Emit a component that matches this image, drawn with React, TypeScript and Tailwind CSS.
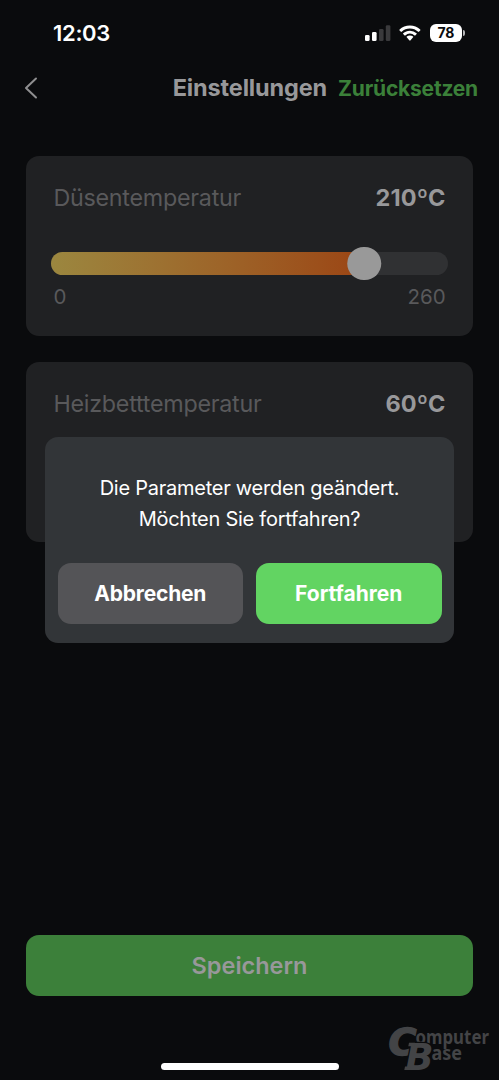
import React from "react";

function StatusBar() {
  return (
    <div className="flex h-[54px] items-start pl-[53px] pr-[35px] pt-[21px]">
      <span className="text-[22px] font-semibold leading-[25px] tracking-[-0.3px] text-white">12:03</span>
      <div className="ml-auto flex items-start">
        <svg className="mt-1" width="26" height="17" viewBox="0 0 26 17" fill="#fff">
          <rect x="0" y="10" width="4.6" height="6" rx="1.3" />
          <rect x="7" y="7" width="4.6" height="9" rx="1.3" />
          <rect x="14" y="4" width="4.6" height="12" rx="1.3" fill="#3a3a3c" />
          <rect x="20.8" y="0.3" width="4.6" height="15.7" rx="1.3" fill="#3a3a3c" />
        </svg>
        <svg className="ml-[8.5px] mt-1" width="22" height="17" viewBox="0 0 23 17" fill="#fff">
          <path d="M11.4 0.2C7.2.2 3.4 1.8.6 4.4c-.3.3-.3.6 0 .9l1.4 1.4c.3.2.6.2.8 0A12.4 12.4 0 0 1 11.4 3.3c3.3 0 6.3 1.3 8.6 3.4.2.2.5.2.8 0l1.4-1.4c.3-.3.3-.6 0-.9A15.8 15.8 0 0 0 11.4.2Z" />
          <path d="M11.4 5.5c-2.7 0-5.2 1-7 2.7-.3.3-.3.6 0 .9l1.4 1.4c.2.2.6.2.8 0a7 7 0 0 1 9.6 0c.2.2.6.2.8 0l1.4-1.4c.3-.3.3-.6 0-.9a10.3 10.3 0 0 0-7-2.7Z" />
          <path d="M11.4 10.5c-1.3 0-2.4.5-3.3 1.2-.3.3-.3.6 0 .8l2.8 3.2c.3.3.7.3 1 0l2.800-3.200c.3-.2.3-.5 0-.8-.9-.7-2-1.200-3.300-1.200Z" />
        </svg>
        <div className="ml-[8.5px] mt-[3px] flex h-[18px] w-[32.5px] items-center justify-center rounded-[6px] bg-white text-[14px] font-bold leading-none tracking-[-0.2px] text-[#0b0c0e]">
          78
        </div>
        <div className="-mr-px ml-[1px] mt-[9px] h-[6px] w-[2px] rounded-r-full bg-[#b5b5b7]" />
      </div>
    </div>
  );
}

function Header() {
  return (
    <header className="flex h-[68px] items-center pl-[24px] pr-[21px]">
      <svg className="shrink-0" width="14" height="22" viewBox="0 0 14 22" fill="none" stroke="#8f8f90" strokeWidth="2" strokeLinecap="round" strokeLinejoin="round">
        <path d="M12 1.5 2 11l10 9.5" />
      </svg>
      <h1 className="ml-auto text-[23.5px] font-[650] leading-[30px] tracking-[-0.15px] text-[#98989a]">Einstellungen</h1>
      <button className="ml-[11px] pt-[2px] text-[21px] font-[650] leading-[30px] tracking-[-0.2px] text-[#3b8039]">Zurücksetzen</button>
    </header>
  );
}

type TemperatureProps = { label: string; value: number; max: number };

function TemperatureCard({ label, value, max }: TemperatureProps) {
  return (
    <section className="h-[180px] rounded-[13px] bg-[#202123] px-[27px] pt-[27px]">
      <div className="flex h-[30px] items-center justify-between">
        <span className="text-[23.3px] leading-[30px] tracking-[-0.25px] text-[#59595b]">{label}</span>
        <span className="text-[23.5px] font-[650] leading-[30px] tracking-[0.1px] text-[#98989a]">{value}ºC</span>
      </div>
      <div className="relative -mx-[2.5px] mt-[38.5px] h-[23px] rounded-full bg-[#303133]">
        <div className="h-full rounded-l-full bg-linear-to-r from-[#9b873f] to-[#9b4514]" style={{ width: `${(value / max) * 97.5}%` }} />
        <div className="absolute -top-[5px] size-[33.5px] -translate-x-1/2 rounded-full bg-[#999]" style={{ left: `${(value / max) * 97.7}%` }} />
      </div>
      <div className="mt-[9px] flex justify-between text-[20.5px] leading-[26px] text-[#59595b]">
        <span>0</span>
        <span>{max}</span>
      </div>
    </section>
  );
}

function ConfirmDialog() {
  return (
    <div role="dialog" className="absolute left-[45px] top-[437px] h-[206px] w-[409px] rounded-[13px] bg-[#323538] px-[12.5px] pt-[36px]">
      <p className="text-center text-[20px] leading-[30.5px] tracking-[-0.25px] text-white">
        Die Parameter werden geändert.
        <br />
        Möchten Sie fortfahren?
      </p>
      <div className="mt-[28.5px] grid grid-cols-2 gap-[13px] text-[21px] font-bold text-white">
        <button className="h-[61px] rounded-[13px] bg-[#545457] pt-[2px] tracking-[-0.2px]">Abbrechen</button>
        <button className="h-[61px] rounded-[13px] bg-[#62d462] pt-[2px]">Fortfahren</button>
      </div>
    </div>
  );
}

function Watermark() {
  return (
    <svg className="absolute left-[385px] top-[1015px]" width="114" height="65" viewBox="0 0 114 65" fill="#434446" fontFamily="'Noto Sans', sans-serif" fontWeight="700">
      <text x="30.5" y="29" fontSize="19.5" textLength="73.5" lengthAdjust="spacingAndGlyphs">omputer</text>
      <text x="46.5" y="45" fontSize="19.5" textLength="30.5" lengthAdjust="spacingAndGlyphs">ase</text>
      <g fontFamily="'DejaVu Sans', sans-serif" fontSize="37" fontStyle="italic">
        <text x="3.5" y="39.5" stroke="#434446" strokeWidth="1.4" textLength="28" lengthAdjust="spacingAndGlyphs">C</text>
        <text x="20.5" y="54.5" stroke="#0a0b0d" strokeWidth="2.5" paintOrder="stroke" textLength="28" lengthAdjust="spacingAndGlyphs">B</text>
      </g>
      <path d="M20 51.5h6l-1 3.5h-5.7zM24 27.8h6l-1 3.5h-5.7z" />
    </svg>
  );
}

export default function App() {
  return (
    <main className="relative flex h-[1080px] w-[499px] flex-col overflow-hidden bg-[#0a0b0d] font-['Inter','Liberation_Sans',sans-serif]">
      <StatusBar />
      <Header />
      <div className="mx-[26.4px] mt-[34px] flex flex-col gap-[26.4px]">
        <TemperatureCard label="Düsentemperatur" value={210} max={260} />
        <TemperatureCard label="Heizbetttemperatur" value={60} max={100} />
      </div>
      <button className="mx-[26.4px] mt-auto h-[61px] shrink-0 rounded-[13px] bg-[#3c803a] text-[23.5px] font-[620] text-[#98989a]">
        Speichern
      </button>
      <div className="mx-auto mb-[10px] mt-[67px] h-[7px] w-[178px] shrink-0 rounded-full bg-white" />
      <ConfirmDialog />
      <Watermark />
    </main>
  );
}
